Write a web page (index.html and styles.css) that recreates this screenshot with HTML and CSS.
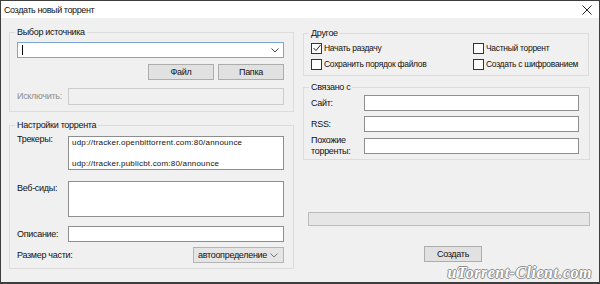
FILE: index.html
```html
<!DOCTYPE html>
<html>
<head>
    <title>Создать новый торрент</title>
    <link rel="stylesheet" href="styles.css">
</head>
<body>
    <div class="window">
        <div class="titlebar">
            <span class="title">Создать новый торрент</span>
            <svg class="close" width="10" height="10" viewBox="0 0 10 10">
                <path d="M0.5 0.5 L9.5 9.5 M9.5 0.5 L0.5 9.5" stroke="#222" stroke-width="1" fill="none"/>
            </svg>
        </div>

        <div class="content">
            <div class="col col-left">
                <fieldset class="group group-source">
                    <legend>Выбор источника</legend>
                    <div class="combo">
                        <span class="caret"></span>
                        <svg class="chevron" width="8" height="5" viewBox="0 0 8 5">
                            <path d="M0.5 0.5 L4 4 L7.5 0.5" stroke="#444" fill="none"/>
                        </svg>
                    </div>
                    <div class="btn-row">
                        <button class="btn">Файл</button>
                        <button class="btn">Папка</button>
                    </div>
                    <div class="field-row row-exclude">
                        <label class="disabled">Исключить:</label>
                        <input class="edit" type="text" disabled>
                    </div>
                </fieldset>

                <fieldset class="group group-settings">
                    <legend>Настройки торрента</legend>
                    <div class="field-row top">
                        <label>Трекеры:</label>
                        <textarea class="edit trackers" readonly>udp://tracker.openbittorrent.com:80/announce

udp://tracker.publicbt.com:80/announce</textarea>
                    </div>
                    <div class="field-row top row-seeds">
                        <label>Веб-сиды:</label>
                        <textarea class="edit seeds" readonly></textarea>
                    </div>
                    <div class="field-row row-desc">
                        <label>Описание:</label>
                        <input class="edit" type="text">
                    </div>
                    <div class="field-row row-piece">
                        <label>Размер части:</label>
                        <div class="select">
                            <span>автоопределение</span>
                            <svg class="chevron" width="8" height="5" viewBox="0 0 8 5">
                                <path d="M0.5 0.5 L4 4 L7.5 0.5" stroke="#777" fill="none"/>
                            </svg>
                        </div>
                    </div>
                </fieldset>
            </div>

            <div class="col col-right">
                <fieldset class="group group-other">
                    <legend>Другое</legend>
                    <div class="check-grid">
                        <label class="check-item">
                            <span class="check checked">
                                <svg width="8" height="8" viewBox="0 0 8 8">
                                    <path d="M0.5 4 L3 6.5 L7.5 1" stroke="#222" stroke-width="1" fill="none"/>
                                </svg>
                            </span>
                            Начать раздачу
                        </label>
                        <label class="check-item">
                            <span class="check"></span>
                            Частный торрент
                        </label>
                        <label class="check-item">
                            <span class="check"></span>
                            Сохранить порядок файлов
                        </label>
                        <label class="check-item">
                            <span class="check"></span>
                            Создать с шифрованием
                        </label>
                    </div>
                </fieldset>

                <fieldset class="group group-linked">
                    <legend>Связано с</legend>
                    <div class="field-row">
                        <label>Сайт:</label>
                        <input class="edit" type="text">
                    </div>
                    <div class="field-row row-rss">
                        <label>RSS:</label>
                        <input class="edit" type="text">
                    </div>
                    <div class="field-row row-similar">
                        <label>Похожие торренты:</label>
                        <input class="edit" type="text">
                    </div>
                </fieldset>

                <div class="progress"></div>

                <button class="btn btn-create">Создать</button>
            </div>
        </div>

        <div class="watermark">uTorrent-Client.com</div>
    </div>
</body>
</html>
```

FILE: styles.css
```css
* {
    box-sizing: border-box;
}

body {
    margin: 0;
    font-family: 'Liberation Sans', Arial, sans-serif;
    font-size: 9px;
    letter-spacing: -0.3px;
    color: #111;
}

.window {
    position: relative;
    width: 600px;
    height: 284px;
    border: 1px solid #3e3e3e;
    border-bottom-width: 2px;
    background-color: #f0f0f0;
    display: flex;
    flex-direction: column;
}

/* Barra de titulo */
.titlebar {
    height: 17px;
    background-color: #ffffff;
    display: flex;
    align-items: center;
    justify-content: space-between;
    padding: 0 7px 0 3px;
}

.title {
    font-size: 9px;
    letter-spacing: -0.4px;
    color: #111;
}

.content {
    flex: 1;
    display: flex;
    gap: 9px;
    padding: 7px 8px 0 8px;
}

.col {
    display: flex;
    flex-direction: column;
}

.col-left {
    width: 285px;
}

.col-right {
    width: 287px;
    padding-top: 1px;
}

/* Grupos */
.group {
    margin: 0;
    padding: 0 9px 6px 7px;
    border: 1px solid #dcdcdc;
    min-width: 0;
}

.group legend {
    padding: 0 2px;
    margin-left: -2px;
    line-height: 14px;
}

.group-source {
    padding-bottom: 6px;
}

.group-settings {
    margin-top: 6px;
    padding-bottom: 5px;
}

.field-row {
    display: flex;
    align-items: center;
}

.field-row.top {
    align-items: flex-start;
}

.field-row label {
    width: 51px;
    flex-shrink: 0;
    line-height: 11px;
}

.field-row.top label {
    padding-top: 2px;
}

.disabled {
    color: #8d8d8d;
}

.edit {
    flex: 1;
    height: 16px;
    margin: 0;
    border: 1px solid #8e8e8e;
    background-color: #ffffff;
    font: inherit;
    letter-spacing: inherit;
    color: #111;
    padding: 0 3px;
    resize: none;
    overflow: hidden;
    outline: none;
}

.edit:disabled {
    background-color: #f0f0f0;
    border-color: #cccccc;
}

.combo {
    margin-top: 3px;
    height: 16px;
    border: 1px solid #7aa7d8;
    background-color: #ffffff;
    display: flex;
    align-items: center;
    justify-content: space-between;
    padding: 0 4px 0 4px;
}

.caret {
    width: 1px;
    height: 10px;
    background-color: #000;
}

.btn-row {
    display: flex;
    justify-content: flex-end;
    gap: 4px;
    margin-top: 6px;
}

.btn {
    width: 66px;
    height: 16px;
    margin: 0;
    padding: 0;
    font: inherit;
    letter-spacing: inherit;
    color: #111;
    background-color: #e1e1e1;
    border: 1px solid #adadad;
}

.row-exclude {
    margin-top: 8px;
}

.row-exclude .edit {
    height: 17px;
}

.trackers {
    margin-top: 4px;
    height: 34px;
    font-size: 8px;
    letter-spacing: 0.2px;
    line-height: 10.5px;
    padding: 1px 3px;
}

.row-seeds {
    margin-top: 11px;
}

.seeds {
    height: 36px;
}

.row-desc {
    margin-top: 9px;
}

.row-piece {
    margin-top: 5px;
    justify-content: space-between;
}

.row-piece label {
    width: auto;
}

.select {
    width: 91px;
    height: 16px;
    background-color: #e5e5e5;
    border: 1px solid #b4b4b4;
    display: flex;
    align-items: center;
    justify-content: space-between;
    padding: 0 5px 0 4px;
}

/* Grupo derecho */
.group-other {
    padding: 0 4px 4px 7px;
    width: 286px;
}

.check-grid {
    display: grid;
    grid-template-columns: 162px 1fr;
    row-gap: 2px;
    margin-top: 1px;
}

.check-item {
    display: flex;
    align-items: center;
    gap: 2px;
    height: 14px;
    white-space: nowrap;
    font-size: 8.5px;
}

.check {
    width: 11px;
    height: 11px;
    border: 1px solid #333;
    background-color: #ffffff;
    display: flex;
    align-items: center;
    justify-content: center;
}

.group-linked {
    margin-top: 4px;
    padding: 0 10px 2px 7px;
}

.group-linked .field-row label {
    width: 53px;
}

.group-linked .field-row:first-of-type {
    margin-top: 1px;
}

.row-rss {
    margin-top: 5px;
}

.row-similar {
    margin-top: 3px;
}

.progress {
    margin: 52px 0 0 5px;
    width: 282px;
    height: 14px;
    background-color: #e6e6e6;
    border: 1px solid #bcbcbc;
}

.btn-create {
    margin: 20px 0 0 121px;
    width: 58px;
}

/* Marca de agua */
.watermark {
    position: absolute;
    right: 7px;
    bottom: 0;
    font-family: 'Liberation Serif', serif;
    font-style: italic;
    font-weight: bold;
    font-size: 16px;
    letter-spacing: 0.5px;
    color: #ffffff;
    text-shadow: -1px 0 #8a8a8a, 1px 0 #8a8a8a, 0 -1px #8a8a8a, 0 1px #8a8a8a;
}
```
